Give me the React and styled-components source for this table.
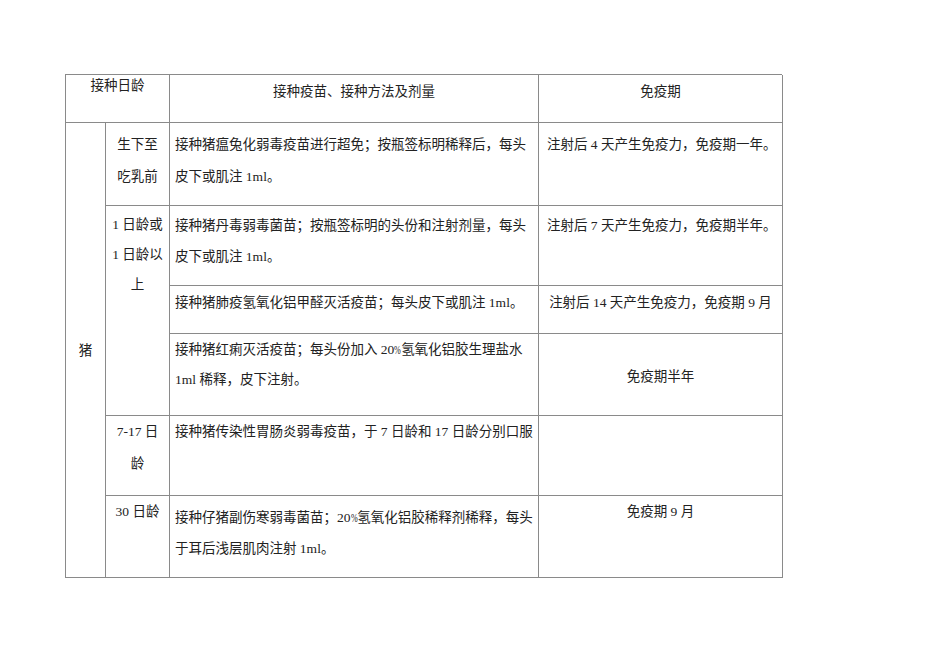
import React from "react";
import styled, { createGlobalStyle } from "styled-components";

const Global = createGlobalStyle`
  html, body { margin: 0; padding: 0; background: #ffffff; }
  body { font-family: "Liberation Serif", "Noto Sans CJK SC", serif; color: #222; }
`;

const Page = styled.div`
  width: 950px;
  height: 672px;
  padding: 74px 0 0 65px;
  box-sizing: border-box;
`;

const Grid = styled.div`
  display: grid;
  grid-template-columns: 40px 64px 369px 244px;
  grid-template-rows: 48px 83px 80px 48px 82px 80px 82px;
  width: 717px;
  border-top: 1px solid #8a8a8a;
  border-left: 1px solid #8a8a8a;
  box-sizing: border-box;
`;

const Cell = styled.div`
  grid-column: ${(p) => p.$col};
  grid-row: ${(p) => p.$row};
  border-right: 1px solid #8a8a8a;
  border-bottom: 1px solid #8a8a8a;
  box-sizing: border-box;
  font-size: 13.5px;
  line-height: ${(p) => p.$lh || 31}px;
  padding: ${(p) => p.$pt || 0}px ${(p) => p.$px ?? 5}px 0;
  text-align: ${(p) => p.$align || "left"};
  white-space: nowrap;
  overflow: hidden;
  display: flex;
  flex-direction: column;
  justify-content: ${(p) => (p.$middle ? "center" : "flex-start")};
`;

const Pct = styled.span`
  display: inline-block;
  transform: scaleX(0.6);
  transform-origin: left center;
  margin-right: -4.5px;
`;

export default function App() {
  return (
    <>
      <Global />
      <Page>
        <Grid>
          <Cell $col="1 / 3" $row="1" $align="center" $lh={22} $pt={0}>接种日龄</Cell>
          <Cell $col="3" $row="1" $align="center" $lh={22} $pt={6}>接种疫苗、接种方法及剂量</Cell>
          <Cell $col="4" $row="1" $align="center" $lh={22} $pt={6}>免疫期</Cell>

          <Cell $col="1" $row="2 / 8" $align="center" $px={0} $middle>猪</Cell>

          <Cell $col="2" $row="2" $align="center" $px={0} $pt={6} $lh={32}>
            <span>生下至</span>
            <span>吃乳前</span>
          </Cell>
          <Cell $col="3" $row="2" $pt={6} $lh={32}>
            <span>接种猪瘟兔化弱毒疫苗进行超免；按瓶签标明稀释后，每头</span>
            <span>皮下或肌注 1ml。</span>
          </Cell>
          <Cell $col="4" $row="2" $pt={6} $px={8} $lh={32}>注射后 4 天产生免疫力，免疫期一年。</Cell>

          <Cell $col="2" $row="3 / 6" $align="center" $px={0} $pt={4} $lh={30}>
            <span>1 日龄或</span>
            <span>1 日龄以</span>
            <span>上</span>
          </Cell>
          <Cell $col="3" $row="3" $pt={4} $lh={31}>
            <span>接种猪丹毒弱毒菌苗；按瓶签标明的头份和注射剂量，每头</span>
            <span>皮下或肌注 1ml。</span>
          </Cell>
          <Cell $col="4" $row="3" $pt={4} $px={8} $lh={31}>注射后 7 天产生免疫力，免疫期半年。</Cell>

          <Cell $col="3" $row="4" $pt={1} $lh={31}>接种猪肺疫氢氧化铝甲醛灭活疫苗；每头皮下或肌注 1ml。</Cell>
          <Cell $col="4" $row="4" $pt={1} $align="center" $lh={31}>注射后 14 天产生免疫力，免疫期 9 月</Cell>

          <Cell $col="3" $row="5" $pt={1} $lh={30}>
            <span>接种猪红痢灭活疫苗；每头份加入 20<Pct>%</Pct>氢氧化铝胶生理盐水</span>
            <span>1ml 稀释，皮下注射。</span>
          </Cell>
          <Cell $col="4" $row="5" $align="center" $middle $pt={4}>免疫期半年</Cell>

          <Cell $col="2" $row="6" $align="center" $px={0} $pt={0} $lh={32}>
            <span>7-17 日</span>
            <span>龄</span>
          </Cell>
          <Cell $col="3" $row="6" $pt={0} $lh={31}>接种猪传染性胃肠炎弱毒疫苗，于 7 日龄和 17 日龄分别口服</Cell>
          <Cell $col="4" $row="6" />

          <Cell $col="2" $row="7" $align="center" $px={0} $pt={0} $lh={31}>30 日龄</Cell>
          <Cell $col="3" $row="7" $pt={6} $lh={31}>
            <span>接种仔猪副伤寒弱毒菌苗；20<Pct>%</Pct>氢氧化铝胶稀释剂稀释，每头</span>
            <span>于耳后浅层肌肉注射 1ml。</span>
          </Cell>
          <Cell $col="4" $row="7" $align="center" $pt={0} $lh={31}>免疫期 9 月</Cell>
        </Grid>
      </Page>
    </>
  );
}
